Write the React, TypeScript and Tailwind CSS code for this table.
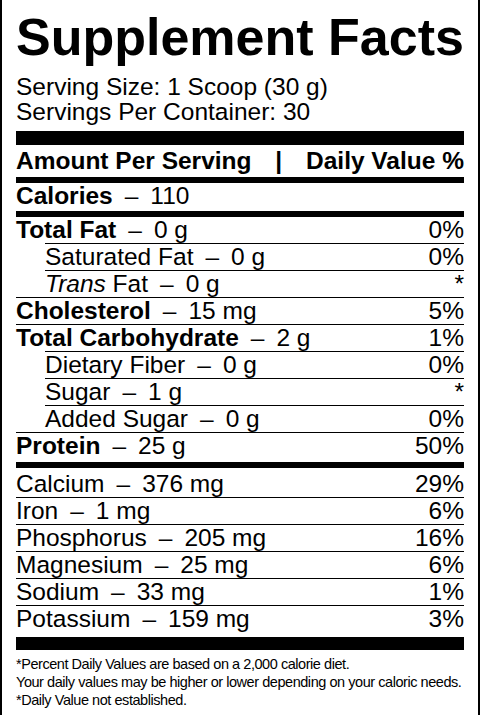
import React from "react";

type Line = "none" | "full" | "indent";
type Row = {
  bold?: string;
  italic?: string;
  rest: string;
  pct: string;
  line: Line;
  indent?: boolean;
};

const nutrients: Row[] = [
  { bold: "Total Fat", rest: " — 0 g", pct: "0%", line: "none" },
  { rest: "Saturated Fat — 0 g", pct: "0%", line: "indent", indent: true },
  { italic: "Trans", rest: " Fat — 0 g", pct: "*", line: "indent", indent: true },
  { bold: "Cholesterol", rest: " — 15 mg", pct: "5%", line: "full" },
  { bold: "Total Carbohydrate", rest: " — 2 g", pct: "1%", line: "full" },
  { rest: "Dietary Fiber — 0 g", pct: "0%", line: "indent", indent: true },
  { rest: "Sugar — 1 g", pct: "*", line: "indent", indent: true },
  { rest: "Added Sugar — 0 g", pct: "0%", line: "indent", indent: true },
  { bold: "Protein", rest: " — 25 g", pct: "50%", line: "full" },
];

const minerals: Row[] = [
  { rest: "Calcium — 376 mg", pct: "29%", line: "none" },
  { rest: "Iron — 1 mg", pct: "6%", line: "full" },
  { rest: "Phosphorus — 205 mg", pct: "16%", line: "full" },
  { rest: "Magnesium — 25 mg", pct: "6%", line: "full" },
  { rest: "Sodium — 33 mg", pct: "1%", line: "full" },
  { rest: "Potassium — 159 mg", pct: "3%", line: "full" },
];

function Dashed({ text }: { text: string }) {
  const parts = text.split(" — ");
  return (
    <>
      {parts.map((p, i) => (
        <React.Fragment key={i}>
          {i > 0 && <span className="inline-block px-[12px]">–</span>}
          {p}
        </React.Fragment>
      ))}
    </>
  );
}

function RowView({ r }: { r: Row }) {
  const lineCls = r.line === "none" ? "" : "border-t border-black";
  return (
    <div className={r.indent ? "pl-[29px]" : ""}>
      <div
        className={`flex justify-between h-[26px] leading-[26px] box-content ${lineCls}`}
      >
        <span className="whitespace-pre">
          {r.bold && <span className="font-bold">{r.bold}</span>}
          {r.italic && <span className="italic">{r.italic}</span>}
          <Dashed text={r.rest} />
        </span>
        <span>{r.pct}</span>
      </div>
    </div>
  );
}

export default function App() {
  return (
    <div className="w-[480px] h-[715px] bg-white text-black border-x-2 border-black px-[14px] font-['Liberation_Sans',Arial,sans-serif] overflow-hidden">
      <h1 className="text-[52px] leading-[52px] font-bold pt-[11px]">
        Supplement Facts
      </h1>
      <div className="text-[24.5px] leading-[25px] mt-[11px]">
        <div>Serving Size: 1 Scoop (30 g)</div>
        <div>Servings Per Container: 30</div>
      </div>
      <div className="h-[14px] bg-black mt-[7px]" />
      <div className="flex justify-between text-[24.5px] leading-[26px] font-bold mt-[3px]">
        <span>Amount Per Serving</span>
        <span>|</span>
        <span>Daily Value %</span>
      </div>
      <div className="h-[6px] bg-black mt-[3px]" />
      <div className="text-[24.5px] leading-[26px] whitespace-pre">
        <span className="font-bold">Calories</span>
        <Dashed text=" — 110" />
      </div>
      <div className="h-[6px] bg-black mt-[2px]" />
      <div className="text-[24.5px]">
        {nutrients.map((r, i) => (
          <RowView key={i} r={r} />
        ))}
      </div>
      <div className="h-[6px] bg-black mt-[3px]" />
      <div className="text-[24.5px] mt-[3px]">
        {minerals.map((r, i) => (
          <RowView key={i} r={r} />
        ))}
      </div>
      <div className="h-[13px] bg-black mt-[5px]" />
      <div className="text-[14.5px] leading-[18px] tracking-[-0.45px] mt-[5px]">
        <div>*Percent Daily Values are based on a 2,000 calorie diet.</div>
        <div>
          Your daily values may be higher or lower depending on your caloric needs.
        </div>
        <div>*Daily Value not established.</div>
      </div>
    </div>
  );
}
